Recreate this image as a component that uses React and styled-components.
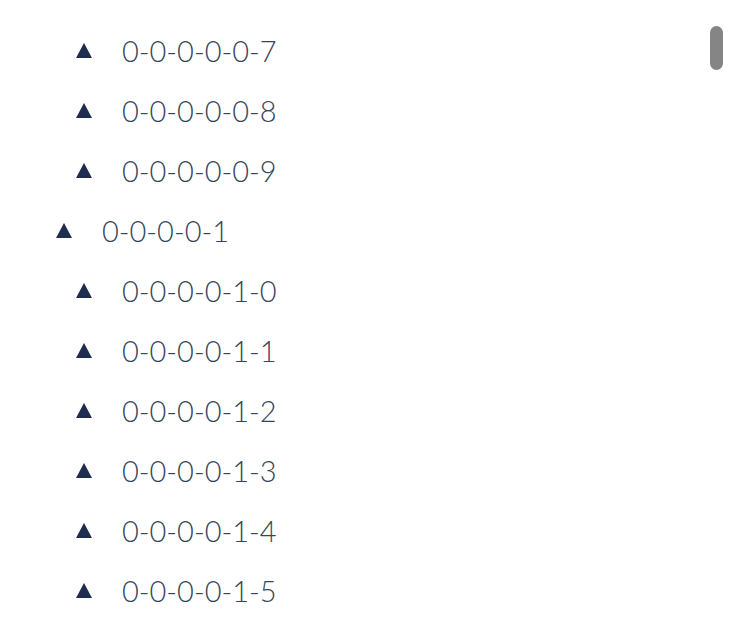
import React from 'react';
import styled, { createGlobalStyle } from 'styled-components';

const nodes = [
  { label: '0-0-0-0-0-7', level: 2 },
  { label: '0-0-0-0-0-8', level: 2 },
  { label: '0-0-0-0-0-9', level: 2 },
  { label: '0-0-0-0-1', level: 1 },
  { label: '0-0-0-0-1-0', level: 2 },
  { label: '0-0-0-0-1-1', level: 2 },
  { label: '0-0-0-0-1-2', level: 2 },
  { label: '0-0-0-0-1-3', level: 2 },
  { label: '0-0-0-0-1-4', level: 2 },
  { label: '0-0-0-0-1-5', level: 2 },
];

export default function App() {
  return (
    <>
      <GlobalStyle />
      <TreeView>
        <TreeList>
          {nodes.map((node) => (
            <TreeRow key={node.label} $level={node.level}>
              <Caret viewBox="0 0 16 15" aria-hidden="true">
                <path d="M8 0 L16 15 L0 15 Z" />
              </Caret>
              <Label>{node.label}</Label>
            </TreeRow>
          ))}
        </TreeList>
        <ScrollThumb />
      </TreeView>
    </>
  );
}

//Styled components
const caretColor = '#1e2d50';
const textColor = '#36465a';

const GlobalStyle = createGlobalStyle`
  html, body {
    margin: 0;
    padding: 0;
    background: #fff;
  }
  body {
    font-family: Lato, "Noto Sans", sans-serif;
  }
`;
const TreeView = styled.div`
  position: relative;
  width: 748px;
  height: 624px;
  overflow: hidden;
`;
const TreeList = styled.ul`
  list-style: none;
  margin: 0;
  padding: 20px 0 0 36px;
`;
const TreeRow = styled.li`
  display: flex;
  align-items: center;
  height: 60px;
  padding-left: ${(p) => p.$level * 20}px;
`;
const Caret = styled.svg`
  width: 16px;
  height: 15px;
  fill: ${caretColor};
  margin-right: 30px;
  flex-shrink: 0;
`;
const Label = styled.span`
  font-size: 29px;
  font-weight: 300;
  color: ${textColor};
  white-space: nowrap;
`;
const ScrollThumb = styled.div`
  position: absolute;
  top: 26px;
  right: 25px;
  width: 13px;
  height: 44px;
  border-radius: 7px;
  background: #858585;
`;
//END Styled components
